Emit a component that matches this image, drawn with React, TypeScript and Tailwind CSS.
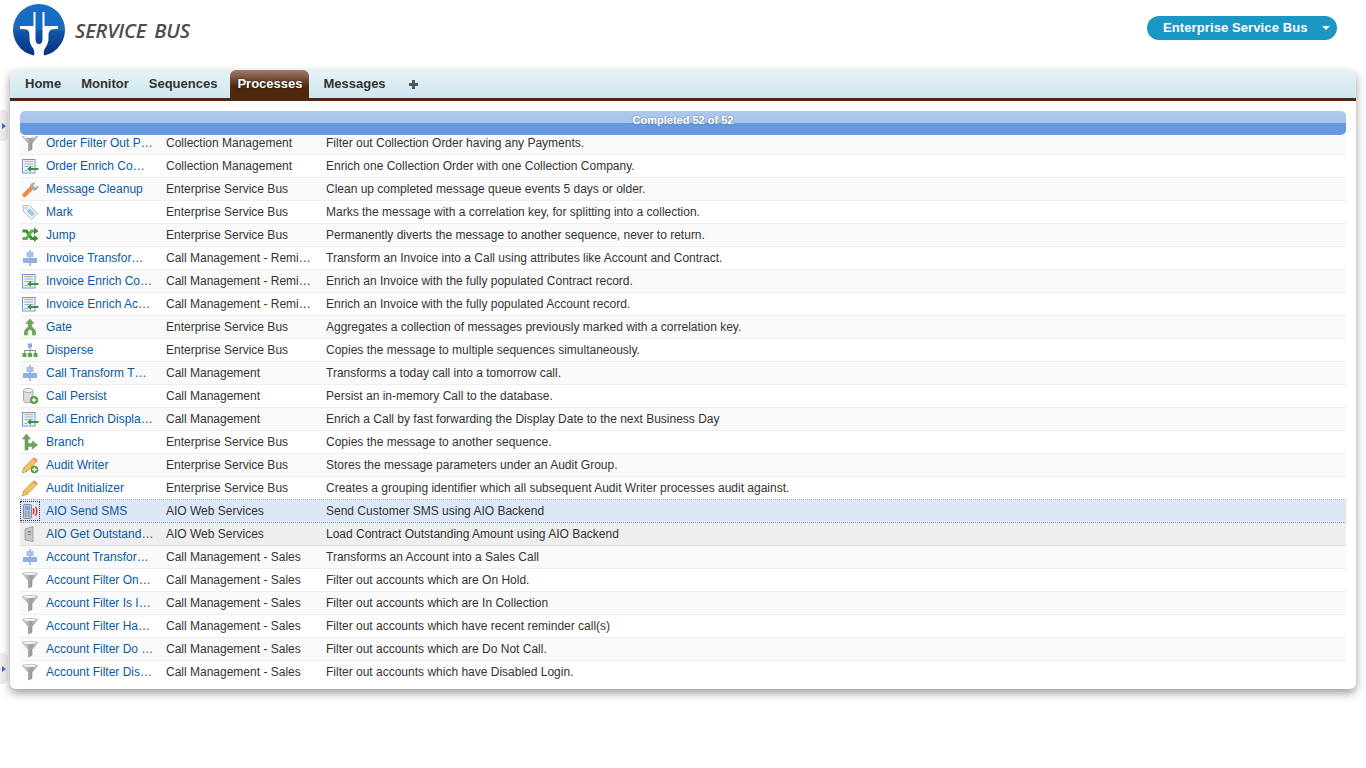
import type { ReactNode } from "react";

const Funnel = () => (
  <svg width="18" height="18" viewBox="0 0 18 18">
    <defs>
      <linearGradient id="fn" x1="0" x2="1" y1="0" y2="0">
        <stop offset="0" stopColor="#e6e6e6" />
        <stop offset="0.55" stopColor="#9a9a9a" />
        <stop offset="1" stopColor="#cfcfcf" />
      </linearGradient>
    </defs>
    <path d="M1.500 2.500c0-1 15-1 15 0L11 9.500v6l-3.500 1.500V9.500z" fill="url(#fn)" stroke="#8a8a8a" strokeWidth="0.6" />
    <ellipse cx="9" cy="2.800" rx="6" ry="1.100" fill="#f7f7f7" />
  </svg>
);

const Enrich = () => (
  <svg width="18" height="18" viewBox="0 0 18 18">
    <rect x="1.500" y="2.500" width="12.500" height="13.500" fill="#eef3fb" stroke="#6f98d8" />
    <path d="M3.500 4.500h8.500" stroke="#c8b37a" strokeWidth="1.200" />
    <path d="M3.500 7h8.500M3.500 9.500h8.500M3.500 13.500h3" stroke="#94aed6" strokeWidth="1" />
    <path d="M17.500 11H10V9l-4 3 4 3v-2h7.500z" fill="#3f9136" />
  </svg>
);

const Wrench = () => (
  <svg width="18" height="18" viewBox="0 0 18 18">
    <path d="M3.500 15 10 8.500" stroke="#f08a42" strokeWidth="4.200" strokeLinecap="round" />
    <path d="M9.500 8.500c-1-2.500.5-5.500 3.500-5.500l1 .3-2 2.200 1 1.800 2 .2 1.800-1.800c.5 2.500-1.500 4.800-4 4.500z" fill="#b0b0b0" stroke="#888" strokeWidth="0.5" />
  </svg>
);

const Tag = () => (
  <svg width="18" height="18" viewBox="0 0 18 18">
    <path d="M2 2.500 8.500 2.500 16.500 10.500 10.500 16.500 2.500 8.500z" fill="#eef2f6" stroke="#b9bdc4" />
    <path d="M7 6.500l2-1 5 5-3 3-5-5z" fill="#9cc7ee" />
    <circle cx="5" cy="5" r="1" fill="#fff" stroke="#a9a9a9" strokeWidth="0.6" />
  </svg>
);

const Jump = () => (
  <svg width="18" height="18" viewBox="0 0 18 18">
    <path d="M1.500 5h4l5 7.500h3" fill="none" stroke="#3f8f35" strokeWidth="3" />
    <path d="M1.500 12.500h4l5-7.500h3" fill="none" stroke="#62ad52" strokeWidth="3" />
    <path d="M13 1.500l4.500 3.500L13 8.500zM13 9l4.500 3.500L13 16z" fill="#3f8f35" />
  </svg>
);

const Transform = () => (
  <svg width="18" height="18" viewBox="0 0 18 18">
    <path d="M9 1v16" stroke="#5b7db5" />
    <rect x="5.500" y="3" width="7" height="5" fill="#a8bfe8" />
    <rect x="2" y="9" width="14" height="5" fill="#8fb0e6" />
  </svg>
);

const Gate = () => (
  <svg width="18" height="18" viewBox="0 0 18 18">
    <path d="M9 1l4 4.500h-2.500V8c0 2 4 2.500 4 6v3h-3v-3c0-2-2.500-2-2.500-3 0 1-2.500 1-2.500 3v3h-3v-3c0-3.500 4-4 4-6V5.500H5z" fill="#6aa957" stroke="#4a8a3b" strokeWidth="0.5" />
  </svg>
);

const Disperse = () => (
  <svg width="18" height="18" viewBox="0 0 18 18">
    <path d="M9 6.500v3M3.500 12v-2.500h11V12M9 9.500V12" stroke="#8a8a8a" fill="none" />
    <rect x="7" y="2.500" width="4" height="4" fill="#86a6de" />
    <rect x="1.500" y="12" width="4" height="4" fill="#5aa548" />
    <rect x="7" y="12" width="4" height="4" fill="#5aa548" />
    <rect x="12.500" y="12" width="4" height="4" fill="#5aa548" />
  </svg>
);

const Persist = () => (
  <svg width="18" height="18" viewBox="0 0 18 18">
    <path d="M2.500 3.500v10c0 1.300 2 2.300 4.500 2.300s5-1 5-2.300v-10z" fill="#dcdcdc" stroke="#8e8e8e" strokeWidth="0.7" />
    <ellipse cx="7.250" cy="3.500" rx="4.750" ry="2" fill="#f3f3f3" stroke="#8e8e8e" strokeWidth="0.7" />
    <circle cx="13" cy="13" r="4" fill="#4f9a3e" />
    <path d="M13 10.800v4.400M10.800 13h4.400" stroke="#fff" strokeWidth="1.300" />
  </svg>
);

const Branch = () => (
  <svg width="18" height="18" viewBox="0 0 18 18">
    <path d="M5.500 1 9.500 6H7v4.500h4.500V8l5 4-5 4v-2.500H7V17H4V6H1.500z" fill="#6aa957" stroke="#4a8a3b" strokeWidth="0.5" />
  </svg>
);

const Pencil = ({ plus }: { plus?: boolean }) => (
  <svg width="18" height="18" viewBox="0 0 18 18">
    <path d="M1.500 16.500l1.200-4.500L12 2.500l3.500 3.500L6 15.300z" fill="#f3c65a" stroke="#b7802a" strokeWidth="0.7" />
    <path d="M1.500 16.500l1.200-4.500L6 15.300z" fill="#f2d9b0" stroke="#b7802a" strokeWidth="0.5" />
    <path d="M12 2.500l3.500 3.500 1-1c.5-1-2.500-4-3.500-3.500z" fill="#e88f6c" />
    {plus && (
      <>
        <circle cx="13.500" cy="13.500" r="3.800" fill="#4f9a3e" />
        <path d="M13.500 11.300v4.400M11.300 13.500h4.400" stroke="#fff" strokeWidth="1.300" />
      </>
    )}
  </svg>
);

const Sms = () => (
  <svg width="18" height="18" viewBox="0 0 18 18">
    <rect x="2.500" y="2.500" width="8" height="14" rx="1" fill="#b9c4d4" stroke="#6f7c8d" strokeWidth="0.8" />
    <rect x="4" y="4" width="5" height="4" fill="#7da3dc" />
    <path d="M4 10h1.500M7 10h1.500M4 12h1.500M7 12h1.500M4 14h1.500M7 14h1.500" stroke="#5f6b7a" />
    <path d="M12 6.500c1 1.500 1 4 0 5.500M14.500 5c1.500 2.500 1.500 6 0 8.500" stroke="#e2232d" strokeWidth="1.400" fill="none" />
  </svg>
);

const Server = () => (
  <svg width="18" height="18" viewBox="0 0 18 18">
    <path d="M4 4l8-2.500v15L4 15z" fill="#c9c9c9" stroke="#8a8a8a" strokeWidth="0.7" />
    <rect x="6.500" y="6" width="3.500" height="1.500" fill="#7d8a7d" />
    <rect x="6.500" y="9" width="3.500" height="1" fill="#5fa25a" />
  </svg>
);

type Row = { icon: ReactNode; name: string; cat: string; desc: string; state?: "selected" | "hover" };

const rows: Row[] = [
  { icon: <Funnel />, name: "Order Filter Out P…", cat: "Collection Management", desc: "Filter out Collection Order having any Payments." },
  { icon: <Enrich />, name: "Order Enrich Co…", cat: "Collection Management", desc: "Enrich one Collection Order with one Collection Company." },
  { icon: <Wrench />, name: "Message Cleanup", cat: "Enterprise Service Bus", desc: "Clean up completed message queue events 5 days or older." },
  { icon: <Tag />, name: "Mark", cat: "Enterprise Service Bus", desc: "Marks the message with a correlation key, for splitting into a collection." },
  { icon: <Jump />, name: "Jump", cat: "Enterprise Service Bus", desc: "Permanently diverts the message to another sequence, never to return." },
  { icon: <Transform />, name: "Invoice Transfor…", cat: "Call Management - Remi…", desc: "Transform an Invoice into a Call using attributes like Account and Contract." },
  { icon: <Enrich />, name: "Invoice Enrich Co…", cat: "Call Management - Remi…", desc: "Enrich an Invoice with the fully populated Contract record." },
  { icon: <Enrich />, name: "Invoice Enrich Ac…", cat: "Call Management - Remi…", desc: "Enrich an Invoice with the fully populated Account record." },
  { icon: <Gate />, name: "Gate", cat: "Enterprise Service Bus", desc: "Aggregates a collection of messages previously marked with a correlation key." },
  { icon: <Disperse />, name: "Disperse", cat: "Enterprise Service Bus", desc: "Copies the message to multiple sequences simultaneously." },
  { icon: <Transform />, name: "Call Transform T…", cat: "Call Management", desc: "Transforms a today call into a tomorrow call." },
  { icon: <Persist />, name: "Call Persist", cat: "Call Management", desc: "Persist an in-memory Call to the database." },
  { icon: <Enrich />, name: "Call Enrich Displa…", cat: "Call Management", desc: "Enrich a Call by fast forwarding the Display Date to the next Business Day" },
  { icon: <Branch />, name: "Branch", cat: "Enterprise Service Bus", desc: "Copies the message to another sequence." },
  { icon: <Pencil plus />, name: "Audit Writer", cat: "Enterprise Service Bus", desc: "Stores the message parameters under an Audit Group." },
  { icon: <Pencil />, name: "Audit Initializer", cat: "Enterprise Service Bus", desc: "Creates a grouping identifier which all subsequent Audit Writer processes audit against." },
  { icon: <Sms />, name: "AIO Send SMS", cat: "AIO Web Services", desc: "Send Customer SMS using AIO Backend", state: "selected" },
  { icon: <Server />, name: "AIO Get Outstand…", cat: "AIO Web Services", desc: "Load Contract Outstanding Amount using AIO Backend", state: "hover" },
  { icon: <Transform />, name: "Account Transfor…", cat: "Call Management - Sales", desc: "Transforms an Account into a Sales Call" },
  { icon: <Funnel />, name: "Account Filter On…", cat: "Call Management - Sales", desc: "Filter out accounts which are On Hold." },
  { icon: <Funnel />, name: "Account Filter Is I…", cat: "Call Management - Sales", desc: "Filter out accounts which are In Collection" },
  { icon: <Funnel />, name: "Account Filter Ha…", cat: "Call Management - Sales", desc: "Filter out accounts which have recent reminder call(s)" },
  { icon: <Funnel />, name: "Account Filter Do …", cat: "Call Management - Sales", desc: "Filter out accounts which are Do Not Call." },
  { icon: <Funnel />, name: "Account Filter Dis…", cat: "Call Management - Sales", desc: "Filter out accounts which have Disabled Login." },
];

const logoHalf = "M20.500 8H22.500V35Q22.500 40 26 40V52H21Q22 48 20.500 45Q16 40 16.500 32Q17 25 11 25H7V22H20.500Z";

const Logo = () => (
  <svg width="52" height="52" viewBox="0 0 52 52">
    <defs>
      <linearGradient id="lg" x1="0" x2="0" y1="0" y2="1">
        <stop offset="0" stopColor="#1a6ec4" />
        <stop offset="0.5" stopColor="#1668c0" />
        <stop offset="0.52" stopColor="#0f56a8" />
        <stop offset="1" stopColor="#0a2f7d" />
      </linearGradient>
    </defs>
    <circle cx="26" cy="26" r="26" fill="url(#lg)" />
    <path d={logoHalf} fill="#fff" />
    <path d={logoHalf} fill="#fff" transform="translate(52 0) scale(-1 1)" />
  </svg>
);

const Handle = ({ top, h }: { top: string; h: string }) => (
  <div className={`absolute left-0 ${top} ${h} flex w-[8px] items-center justify-center rounded-r-[5px] bg-[#eeeeee]`}>
    <div className="h-0 w-0 border-y-[3px] border-l-[4px] border-y-transparent border-l-[#3f6fc4]" />
  </div>
);

const rowClass = (r: Row, i: number) => {
  if (r.state === "selected") return "border-b border-dotted border-[#8aa0c4] bg-[#dde7f6]";
  if (r.state === "hover") return "border-b border-[#dddddd] bg-[#eeeeee]";
  const stripe = i % 2 === 0 ? "bg-[#fafafa]" : "bg-white";
  if (i === rows.length - 1) return stripe;
  if (rows[i + 1].state === "selected") return `border-b border-dotted border-[#8aa0c4] ${stripe}`;
  return `border-b border-[#eeeeee] ${stripe}`;
};

export default function App() {
  return (
    <div className="relative h-[768px] w-[1366px] overflow-hidden bg-white font-['Liberation_Sans',Arial,sans-serif] text-[12px] text-[#333]">
      <Handle top="top-[110px]" h="h-[31px]" />
      <Handle top="top-[653px]" h="h-[31px]" />

      {/* header */}
      <div className="flex h-[70px] justify-between pl-[13px] pr-[29px]">
        <div className="flex items-start">
          <div className="mt-[4px]"><Logo /></div>
          <div className="ml-[10px] mt-[17px] font-['Open_Sans',sans-serif] text-[20px] font-semibold italic leading-[28px] tracking-[-0.2px] text-[#4d4d4d] [word-spacing:3px]">SERVICE BUS</div>
        </div>
        <div className="mt-[16px] flex h-[24px] w-[190px] items-center justify-between rounded-full bg-[#1a98c3] pl-[16px] pr-[7px] text-[13px] font-bold tracking-[0.1px] text-white">
          <span>Enterprise Service Bus</span>
          <div className="h-0 w-0 border-x-[4px] border-t-[4px] border-x-transparent border-t-white" />
        </div>
      </div>

      {/* main panel */}
      <div className="relative ml-[10px] h-[619px] w-[1346px] rounded-[6px] bg-white shadow-[0_4px_10px_rgba(0,0,0,0.4)]">
        <div className="flex h-[31px] items-end rounded-t-[6px] border-b-[3px] border-[#4f280e] bg-gradient-to-b from-[#e6f2f6] to-[#cfe6ee] pl-[15px] text-[13px] font-bold">
          <div className="flex h-[28px] items-center">Home</div>
          <div className="ml-[20px] flex h-[28px] items-center">Monitor</div>
          <div className="ml-[20px] flex h-[28px] items-center">Sequences</div>
          <div className="ml-[13px] flex h-[28px] w-[79px] items-center justify-center rounded-t-[6px] bg-gradient-to-b from-[#a07c68] via-[#4f280e] via-60% to-[#4f280e] text-white [text-shadow:0_0_2px_rgba(0,0,0,0.8)]">Processes</div>
          <div className="ml-[14px] flex h-[28px] items-center">Messages</div>
          <div className="ml-[23px] flex h-[28px] items-center">
            <svg width="9" height="9" viewBox="0 0 9 9"><path d="M4.500 0v9M0 4.500h9" stroke="#555" strokeWidth="3" /></svg>
          </div>
        </div>

        <div className="mx-[10px] mt-[10px]">
          <div className="flex h-[24px] items-center justify-center rounded-[5px] bg-[linear-gradient(#adc8ec_0,#a6c3ea_50%,#6699dd_50%,#6699dd_100%)] pb-[6px] text-[11px] font-bold text-white [text-shadow:0_0_2px_rgba(0,0,0,0.4)]">
            Completed 52 of 52
          </div>
          <div className="mt-[1px] h-[548px] overflow-hidden">
            <div className="-mt-[4px]">
              {rows.map((r, i) => (
                <div key={r.name} className={`flex h-[23px] items-center pb-[1px] ${rowClass(r, i)}`}>
                  <div className="flex w-[20px] shrink-0 justify-center">
                    <div className={r.state === "selected" ? "outline-1 outline-dotted outline-[#333]" : ""}>{r.icon}</div>
                  </div>
                  <div className="ml-[6px] w-[109px] shrink-0 whitespace-nowrap text-[#0a5aa5]">{r.name}</div>
                  <div className="ml-[11px] w-[146px] shrink-0 whitespace-nowrap">{r.cat}</div>
                  <div className="ml-[14px] whitespace-nowrap">{r.desc}</div>
                </div>
              ))}
            </div>
          </div>
        </div>
      </div>
    </div>
  );
}
